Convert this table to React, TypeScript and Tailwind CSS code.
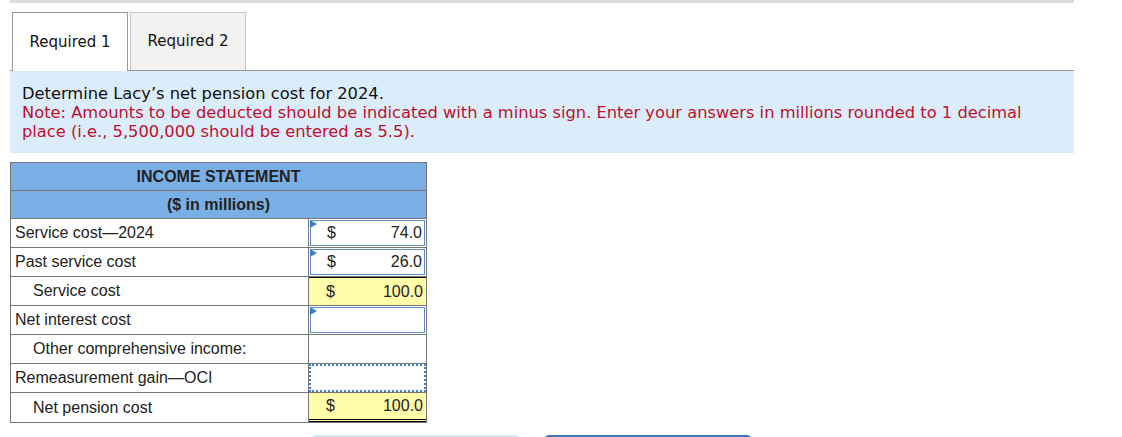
import React from 'react';

const verdana = { fontFamily: '"DejaVu Sans", Verdana, sans-serif' };
const arial = { fontFamily: '"Liberation Sans", Arial, sans-serif' };

type Row = {
  label: string;
  indent?: boolean;
  kind: 'input' | 'total' | 'empty' | 'dotted' | 'final';
  value?: string;
};

const rows: Row[] = [
  { label: 'Service cost\u20142024', kind: 'input', value: '74.0' },
  { label: 'Past service cost', kind: 'input', value: '26.0' },
  { label: 'Service cost', indent: true, kind: 'total', value: '100.0' },
  { label: 'Net interest cost', kind: 'input' },
  { label: 'Other comprehensive income:', indent: true, kind: 'empty' },
  { label: 'Remeasurement gain\u2014OCI', kind: 'dotted' },
  { label: 'Net pension cost', indent: true, kind: 'final', value: '100.0' },
];

export default function App() {
  return (
    <div className="relative h-[437px] w-[1122px] overflow-hidden bg-white">
      <div className="ml-[10px] h-[3px] w-[1064px] bg-[#dddddd]" />

      {/* Tabs */}
      <div className="ml-[10px] mt-[9px] flex w-[1064px] items-end gap-[2px] border-b border-[#999999] pl-[2px]" style={verdana}>
        <div className="-mb-px flex h-[59px] w-[116px] items-center justify-center border border-b-0 border-[#999999] bg-white text-[15px] text-[#111]">
          Required 1
        </div>
        <div className="flex h-[58px] w-[116px] items-center justify-center border border-b-0 border-[#c8c8c8] bg-[#f2f2f2] text-[15px] text-[#111]">
          Required 2
        </div>
      </div>

      {/* Instructions */}
      <div className="ml-[10px] h-[82px] w-[1064px] bg-[#dbedfa] pl-[12px] pr-[30px] pt-[13px] text-[16.3px] leading-[19px]" style={verdana}>
        <div className="text-[#111]">Determine Lacy’s net pension cost for 2024.</div>
        <div className="text-[#c0102c]">
          Note: Amounts to be deducted should be indicated with a minus sign. Enter your answers in millions rounded to 1 decimal place (i.e., 5,500,000 should be entered as 5.5).
        </div>
      </div>

      {/* Income statement */}
      <div className="ml-[10px] mt-[9px] w-[417px] border border-[#777777] text-[16px] text-[#222]" style={arial}>
        <div className="flex h-[28px] items-center justify-center border-b border-[#777777] bg-[#7aafe6] font-bold">
          INCOME STATEMENT
        </div>
        <div className="flex h-[28px] items-center justify-center border-b border-[#777777] bg-[#7aafe6] font-bold">
          ($ in millions)
        </div>
        {rows.map((r, i) => (
          <div key={i} className={`flex h-[29px] ${i < rows.length - 1 ? 'border-b border-[#777777]' : ''}`}>
            <div className={`flex w-[298px] items-center border-r border-[#777777] ${r.indent ? 'pl-[22px]' : 'pl-[4px]'}`}>
              {r.label}
            </div>
            <ValueCell row={r} />
          </div>
        ))}
      </div>

      {/* Bottom buttons (cut off) */}
      <div className="ml-[312px] mt-[12px] flex gap-[26px]">
        <div className="h-[8px] w-[207px] rounded-t-[4px] bg-[#d7e5f5]" />
        <div className="h-[8px] w-[206px] rounded-t-[4px] bg-[#3a78bd]" />
      </div>
    </div>
  );
}

function ValueCell({ row }: { row: Row }) {
  if (row.kind === 'input') {
    return (
      <div className="relative flex flex-1 p-[1px]">
        <div className="relative flex flex-1 items-center justify-between border border-[#5a8ccc] pl-[16px] pr-[2px]">
          <span className="absolute left-[-1px] top-[-1px] h-0 w-0 border-y-[4px] border-l-[7px] border-y-transparent border-l-[#3c7cc9]" />
          {row.value ? (
            <>
              <span>$</span>
              <span>{row.value}</span>
            </>
          ) : null}
        </div>
      </div>
    );
  }
  if (row.kind === 'total' || row.kind === 'final') {
    return (
      <div
        className={`flex flex-1 items-center justify-between bg-[#fffcaa] pl-[17px] pr-[3px] ${
          row.kind === 'total' ? 'border-t border-black' : 'border-b-[3px] border-double border-black'
        }`}
      >
        <span>$</span>
        <span>{row.value}</span>
      </div>
    );
  }
  if (row.kind === 'dotted') {
    return <div className="flex-1 border-2 border-dotted border-[#3f7fc8]" />;
  }
  return <div className="flex-1" />;
}
